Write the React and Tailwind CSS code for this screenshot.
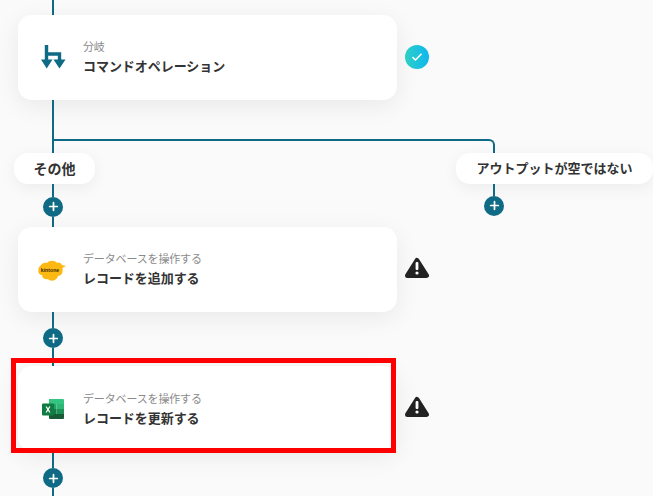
import React from 'react';
import { Plus } from 'lucide-react';

const font = { fontFamily: '"Noto Sans CJK JP", "Noto Sans", sans-serif' };

function BranchIcon() {
    return (
        <svg width="26" height="26" viewBox="0 0 26 26" fill="none" className="ml-[3px]">
            <path d="M5.5 1v16M5.5 10H18.5V17" stroke="#0f6a85" strokeWidth="3.4" />
            <path d="M0 15.5H11.5L5.7 24.5Z M12.5 15.5H24.5L18.5 24.5Z" fill="#0f6a85" />
        </svg>
    );
}

function KintoneIcon() {
    return (
        <svg width="30" height="22" viewBox="0 0 30 22" className="mt-[3px]">
            <path d="M3 6C5 3 8 2 10 3C12 0 18 0 20 3C22 2 24 3 25 5L29 6L25.5 8C26.5 13 24 16 21 16C20 21 13 22 11 19C8 20 5 18 5 15C1 15 0 9 3 6Z" fill="#fdb913" />
            <text x="13" y="11.5" textAnchor="middle" fontSize="5.2" fontWeight="700" fill="#3a2c00" fontFamily="Liberation Sans, sans-serif">kintone</text>
        </svg>
    );
}

function ExcelIcon() {
    return (
        <svg width="24" height="22" viewBox="0 0 24 22" className="ml-[1px]">
            <path d="M8 1H22a1 1 0 0 1 1 1V6H8Z" fill="#33c481" />
            <path d="M8 6H15.5V11H8Z" fill="#21a366" />
            <path d="M15.5 6H23V11H15.5Z" fill="#2fb676" />
            <path d="M8 11H15.5V16H8Z" fill="#107c41" />
            <path d="M15.5 11H23V16H15.5Z" fill="#1d8f57" />
            <path d="M8 16H23V20a1 1 0 0 1-1 1H9a1 1 0 0 1-1-1Z" fill="#185c37" />
            <rect x="1" y="5.5" width="12" height="12" rx="1" fill="#107c41" />
            <path d="M4.5 8.4H5.9L7 10.5L8.1 8.4H9.5L7.8 11.5L9.5 14.6H8.1L7 12.5L5.9 14.6H4.5L6.2 11.5Z" fill="#fff" />
        </svg>
    );
}

function CheckBadge() {
    return (
        <span className="flex h-6 w-6 items-center justify-center rounded-full bg-gradient-to-r from-[#2dd0c4] to-[#10b6ee]">
            <svg width="12" height="10" viewBox="0 0 12 10" fill="none">
                <path d="M1.5 5.2L4.5 8L10.5 1.8" stroke="#fff" strokeWidth="1.6" />
            </svg>
        </span>
    );
}

function WarningBadge() {
    return (
        <svg width="24" height="21" viewBox="0 0 24 21" className="mb-[4px]">
            <path d="M12 3.5L21.5 18.5H2.5Z" fill="#222" stroke="#222" strokeWidth="5" strokeLinejoin="round" />
            <rect x="10.6" y="5" width="2.8" height="8" rx="1" fill="#fff" />
            <circle cx="12" cy="16" r="1.6" fill="#fff" />
        </svg>
    );
}

function Line({ height, className = 'ml-[52px]' }) {
    return <div className={`w-[2px] bg-[#0f6a85] ${height} ${className}`} />;
}

function AddButton({ className = 'ml-[43px]' }) {
    return (
        <div className={`flex h-5 w-5 items-center justify-center rounded-full bg-[#0f6a85] ${className}`}>
            <Plus size={13} color="#fff" strokeWidth={3.2} />
        </div>
    );
}

function Card({ icon, label, title, badge }) {
    return (
        <div className="ml-[18px] flex items-center">
            <div className="flex h-[85px] w-[379px] items-center rounded-[14px] bg-white shadow-[0_6px_24px_rgba(0,0,0,0.07)]">
                <div className="flex w-[65px] justify-center pl-[3px]">{icon}</div>
                <div className="flex flex-col pt-[1px]">
                    <span className="text-[11px] leading-[16px] tracking-[-0.15px] text-[#8a8a8a]">{label}</span>
                    <span className="mt-[1px] text-[13px] leading-[22px] font-bold tracking-[-0.05px] text-[#333]">{title}</span>
                </div>
            </div>
            <div className="ml-2 flex w-6 justify-center">{badge}</div>
        </div>
    );
}

function Pill({ children, className }) {
    return (
        <div className={`flex h-[31px] items-center justify-center rounded-[14px] bg-white font-bold text-[#333] shadow-[0_4px_16px_rgba(0,0,0,0.06)] ${className}`}>
            {children}
        </div>
    );
}

export default function App() {
    return (
        <div className="relative flex h-[496px] w-[653px] flex-col overflow-hidden bg-[#fafafa]" style={font}>
            <Line height="h-[15px]" />
            <Card
                icon={<BranchIcon />}
                label="分岐"
                title="コマンドオペレーション"
                badge={<CheckBadge />}
            />
            <Line height="h-[39px]" />

            {/* branch connector */}
            <div className="ml-[52px] h-[14px] w-[443px] rounded-tr-[6px] border-t-2 border-r-2 border-l-2 border-[#0f6a85] [border-top-left-radius:0]" />
            <div className="flex justify-between">
                <div className="flex flex-col">
                    <Pill className="ml-[14px] w-[81px] text-[14px]">その他</Pill>
                    <Line height="h-[13px]" />
                    <AddButton />
                    <Line height="h-[10px]" />
                </div>
                <div className="flex flex-col">
                    <Pill className="w-[197px] text-[13px]">アウトプットが空ではない</Pill>
                    <Line height="h-[12px]" className="ml-[37px]" />
                    <AddButton className="ml-[28px]" />
                </div>
            </div>

            <Card
                icon={<KintoneIcon />}
                label="データベースを操作する"
                title="レコードを追加する"
                badge={<WarningBadge />}
            />
            <Line height="h-[17px]" />
            <AddButton />
            <Line height="h-[18px]" />
            <Card
                icon={<ExcelIcon />}
                label="データベースを操作する"
                title="レコードを更新する"
                badge={<WarningBadge />}
            />
            <Line height="h-[17px]" />
            <AddButton />
            <Line height="h-[8px]" />

            {/* highlight frame over the last card */}
            <div className="absolute top-[358px] left-[11px] h-[95px] w-[385px] border-[5px] border-[#ff0000]" />
        </div>
    );
}
